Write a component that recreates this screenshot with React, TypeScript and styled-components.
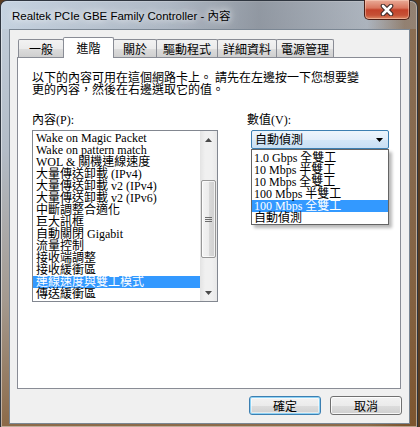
import React from 'react'
import styled, { createGlobalStyle } from 'styled-components'

const cjk = `"Liberation Serif", "Noto Sans CJK TC", serif`
const ui = `"Liberation Sans", "Noto Sans CJK TC", sans-serif`

const properties = [
  'Wake on Magic Packet',
  'Wake on pattern match',
  'WOL & 關機連線速度',
  '大量傳送卸載 (IPv4)',
  '大量傳送卸載 v2 (IPv4)',
  '大量傳送卸載 v2 (IPv6)',
  '中斷調整合適化',
  '巨大訊框',
  '自動關閉 Gigabit',
  '流量控制',
  '接收端調整',
  '接收緩衝區',
  '連線速度與雙工模式',
  '傳送緩衝區',
]

const values = [
  '1.0 Gbps 全雙工',
  '10 Mbps 半雙工',
  '10 Mbps 全雙工',
  '100 Mbps 半雙工',
  '100 Mbps 全雙工',
  '自動偵測',
]

const tabs = [
  { label: '一般', width: 46 },
  { label: '進階', width: 51 },
  { label: '關於', width: 44 },
  { label: '驅動程式', width: 62 },
  { label: '詳細資料', width: 60 },
  { label: '電源管理', width: 58 },
]

const App: React.FC = () => {
  const [activeTab, setActiveTab] = React.useState(1)
  const [selected, setSelected] = React.useState(12)
  const [valueIndex, setValueIndex] = React.useState(4)

  return (
    <>
      <GlobalStyle />
      <Window>
        <TitleBar>
          <Title>Realtek PCIe GBE Family Controller - 內容</Title>
          <CloseButton aria-label="關閉">
            <svg width="14" height="12" viewBox="0 0 14 12">
              <path d="M3 2 L11 10 M11 2 L3 10" stroke="#3b2a28" strokeWidth="4.6" strokeLinecap="round" />
              <path d="M3 2 L11 10 M11 2 L3 10" stroke="#ffffff" strokeWidth="2.6" strokeLinecap="round" />
            </svg>
          </CloseButton>
        </TitleBar>
        <Client>
          <TabStrip>
            {tabs.map((t, i) => (
              <Tab key={t.label} $width={t.width} $active={i === activeTab} onClick={() => setActiveTab(i)}>
                {t.label}
              </Tab>
            ))}
          </TabStrip>
          <Panel>
            <Description>
              以下的內容可用在這個網路卡上。 請先在左邊按一下您想要變
              <br />
              更的內容，然後在右邊選取它的值。
            </Description>
            <Columns>
              <PropertyColumn>
                <FieldLabel>內容(P):</FieldLabel>
                <ListBox>
                  <Items>
                    {properties.map((p, i) => (
                      <Item key={p} $selected={i === selected} onClick={() => setSelected(i)}>
                        {p}
                      </Item>
                    ))}
                  </Items>
                  <ScrollBar>
                    <ScrollArrow>
                      <svg width="7" height="4" viewBox="0 0 7 4">
                        <path d="M3.5 0 L7 4 L0 4 Z" fill="#4a4a4a" />
                      </svg>
                    </ScrollArrow>
                    <Track>
                      <Thumb>
                        <Grip />
                      </Thumb>
                    </Track>
                    <ScrollArrow>
                      <svg width="7" height="4" viewBox="0 0 7 4">
                        <path d="M0 0 L7 0 L3.5 4 Z" fill="#4a4a4a" />
                      </svg>
                    </ScrollArrow>
                  </ScrollBar>
                </ListBox>
              </PropertyColumn>
              <ValueColumn>
                <FieldLabel>數值(V):</FieldLabel>
                <Combo>
                  <ComboText>自動偵測</ComboText>
                  <svg width="7" height="4" viewBox="0 0 7 4">
                    <path d="M0 0 L7 0 L3.5 4 Z" fill="#000000" />
                  </svg>
                  <DropList>
                    {values.map((v, i) => (
                      <DropItem key={v} $selected={i === valueIndex} onMouseEnter={() => setValueIndex(i)}>
                        {v}
                      </DropItem>
                    ))}
                  </DropList>
                </Combo>
              </ValueColumn>
            </Columns>
          </Panel>
          <ButtonRow>
            <DialogButton $default>確定</DialogButton>
            <DialogButton>取消</DialogButton>
          </ButtonRow>
        </Client>
      </Window>
    </>
  )
}
export default App

const GlobalStyle = createGlobalStyle`
  html, body {
    margin: 0;
    padding: 0;
  }
  body {
    width: 420px;
    height: 427px;
    overflow: hidden;
    background: #5a3c20;
    font-family: ${ui};
  }
`

const Window = styled.div`
  box-sizing: border-box;
  width: 418px;
  height: 427px;
  display: flex;
  flex-direction: column;
  border: 1px solid #2f3640;
  border-bottom: none;
  border-radius: 7px 7px 0 0;
  background:
    linear-gradient(to right, rgba(0, 0, 0, 0) 88%, rgba(120, 78, 38, 0.75) 97%),
    linear-gradient(to bottom, #c3cfdc 0%, #b3bcc7 35%, #a49a90 70%, #8c6a48 100%);
  box-shadow: inset 0 0 0 1px rgba(255, 255, 255, 0.45);
`

const TitleBar = styled.div`
  height: 28px;
  display: flex;
  align-items: flex-start;
  padding-left: 11px;
  background: linear-gradient(
    to right,
    rgba(200, 214, 228, 0.6) 0%,
    rgba(150, 158, 170, 0.45) 40%,
    rgba(112, 116, 124, 0.6) 62%,
    rgba(140, 142, 148, 0.45) 85%,
    rgba(165, 167, 172, 0.35) 100%
  );
  border-radius: 6px 6px 0 0;
`

const Title = styled.div`
  margin-top: 8px;
  font-size: 11.5px;
  line-height: 14px;
  color: #000;
  font-family: ${ui};
  text-shadow: 0 0 6px rgba(255, 255, 255, 0.95), 0 0 12px rgba(255, 255, 255, 0.8);
`

const CloseButton = styled.button`
  margin-left: auto;
  margin-right: 7px;
  margin-top: -1px;
  width: 46px;
  height: 20px;
  padding: 0;
  display: flex;
  align-items: center;
  justify-content: center;
  border: 1px solid #4a1e16;
  border-top: none;
  border-radius: 0 0 5px 5px;
  background: linear-gradient(#e9ab98 0%, #d9765e 42%, #c3422a 52%, #c65136 80%, #dd8a66 100%);
  box-shadow: inset 0 0 0 1px rgba(255, 220, 200, 0.45);
`

const Client = styled.div`
  flex: 1;
  display: flex;
  flex-direction: column;
  margin: 0 7px 3px 8px;
  padding: 7px 8px 0 7px;
  border: 1px solid #7b8794;
  background: #f0f0f0;
`

const TabStrip = styled.div`
  height: 20px;
  display: flex;
  align-items: flex-end;
  padding-left: 2px;
`

const Tab = styled.div<{ $width: number; $active?: boolean }>`
  box-sizing: border-box;
  width: ${p => p.$width}px;
  height: ${p => (p.$active ? 21 : 18)}px;
  margin-left: -1px;
  margin-bottom: ${p => (p.$active ? -1 : 0)}px;
  position: relative;
  z-index: ${p => (p.$active ? 2 : 1)};
  display: flex;
  align-items: center;
  justify-content: center;
  padding-top: ${p => (p.$active ? 0 : 1)}px;
  border: 1px solid #898c95;
  border-bottom: none;
  border-radius: 2px 2px 0 0;
  font-family: ${cjk};
  font-size: 12px;
  color: #000;
  cursor: default;
  background: ${p =>
    p.$active ? '#ffffff' : 'linear-gradient(#f2f2f2 0%, #ebebeb 50%, #dddddd 51%, #cfcfcf 100%)'};
`

const Panel = styled.div`
  height: 332px;
  box-sizing: border-box;
  padding: 14px 0 0 14px;
  background: #fff;
  border: 1px solid #898c95;
`

const Description = styled.p`
  margin: 0;
  font-family: ${cjk};
  font-size: 12px;
  line-height: 12px;
  color: #000;
`

const Columns = styled.div`
  display: flex;
  margin-top: 18px;
`

const PropertyColumn = styled.div`
  display: flex;
  flex-direction: column;
  width: 186px;
`

const ValueColumn = styled.div`
  display: flex;
  flex-direction: column;
  margin-left: 29px;
`

const FieldLabel = styled.div`
  font-family: ${cjk};
  font-size: 12px;
  line-height: 12px;
  height: 12px;
  margin-bottom: 4px;
  color: #000;
`

const ListBox = styled.div`
  box-sizing: border-box;
  width: 186px;
  height: 172px;
  display: flex;
  border: 1px solid #828790;
  background: #fff;
`

const Items = styled.div`
  flex: 1;
  padding-top: 1px;
  overflow: hidden;
`

const Item = styled.div<{ $selected?: boolean }>`
  height: 12px;
  line-height: 12px;
  padding-left: 3px;
  font-family: ${cjk};
  font-size: 12px;
  white-space: nowrap;
  color: ${p => (p.$selected ? '#fff' : '#000')};
  background: ${p => (p.$selected ? '#3399ff' : 'transparent')};
  cursor: default;
`

const ScrollBar = styled.div`
  width: 17px;
  display: flex;
  flex-direction: column;
  background: linear-gradient(to right, #e3e3e3, #f0f0f0 30%, #f0f0f0 70%, #e8e8e8);
`

const ScrollArrow = styled.div`
  height: 17px;
  display: flex;
  align-items: center;
  justify-content: center;
`

const Track = styled.div`
  flex: 1;
  display: flex;
  flex-direction: column;
  padding: 32px 0 26px;
`

const Thumb = styled.div`
  flex: 1;
  margin: 0 1px;
  display: flex;
  align-items: center;
  justify-content: center;
  border: 1px solid #979797;
  border-radius: 2px;
  background: linear-gradient(to right, #f4f4f4 0%, #ececec 50%, #dadada 51%, #d0d0d0 100%);
  box-shadow: inset 0 0 0 1px rgba(255, 255, 255, 0.7);
`

const Grip = styled.div`
  width: 7px;
  height: 5px;
  background: repeating-linear-gradient(#6d6d6d 0, #6d6d6d 1px, transparent 1px, transparent 2px);
`

const Combo = styled.div`
  position: relative;
  box-sizing: border-box;
  width: 138px;
  height: 19px;
  margin-left: 4px;
  display: flex;
  align-items: center;
  padding: 0 5px 0 3px;
  border: 1px solid #3c7fb1;
  border-radius: 2px;
  background: linear-gradient(#edf5fc 0%, #e2eefa 50%, #d4e7f7 51%, #c8dff4 100%);
`

const ComboText = styled.span`
  flex: 1;
  font-family: ${cjk};
  font-size: 12px;
  line-height: 12px;
  color: #000;
`

const DropList = styled.div`
  position: absolute;
  top: 18px;
  left: -1px;
  width: 138px;
  box-sizing: border-box;
  padding: 2px 0 0;
  border: 1px solid #646464;
  background: #fff;
  box-shadow: 3px 3px 3px rgba(0, 0, 0, 0.28);
  z-index: 5;
`

const DropItem = styled.div<{ $selected?: boolean }>`
  height: 12px;
  line-height: 12px;
  padding-left: 2px;
  font-family: ${cjk};
  font-size: 12px;
  white-space: nowrap;
  color: ${p => (p.$selected ? '#fff' : '#000')};
  background: ${p => (p.$selected ? '#3399ff' : 'transparent')};
  cursor: default;
`

const ButtonRow = styled.div`
  display: flex;
  justify-content: flex-end;
  gap: 9px;
  margin-top: 7px;
  margin-right: -1px;
`

const DialogButton = styled.button<{ $default?: boolean }>`
  box-sizing: border-box;
  width: 72px;
  height: 19px;
  padding: 0;
  font-family: ${cjk};
  font-size: 12px;
  color: #000;
  border-radius: 3px;
  border: 1px solid ${p => (p.$default ? '#3c7fb1' : '#707070')};
  background: linear-gradient(#f2f2f2 0%, #ebebeb 50%, #dddddd 51%, #cfcfcf 100%);
  box-shadow: ${p =>
    p.$default ? 'inset 0 0 0 1px #8ed2f5, inset 0 0 0 2px rgba(255,255,255,0.5)' : 'inset 0 0 0 1px rgba(255,255,255,0.8)'};
`
